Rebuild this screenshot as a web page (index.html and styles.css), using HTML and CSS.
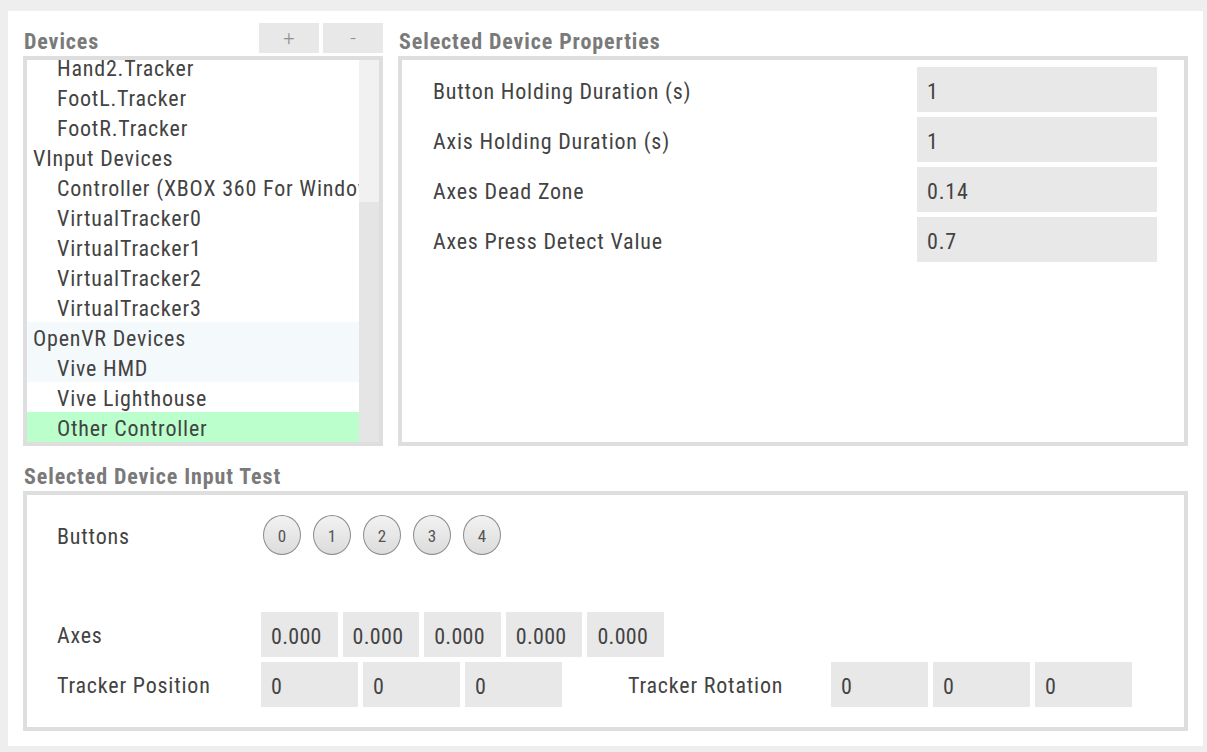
FILE: index.html
```html
<!DOCTYPE html>
<html lang="en">
<head>
<meta charset="utf-8">
<title>Device Manager</title>
<link rel="stylesheet" href="styles.css">
</head>
<body>
<div class="window">
  <div class="top">
    <section class="devices">
      <div class="sec-head">
        <h2 class="title">Devices</h2>
        <div class="btns">
          <button class="tool-btn">+</button>
          <button class="tool-btn">-</button>
        </div>
      </div>
      <div class="list-box">
        <div class="list">
          <div class="list-inner">
            <div class="row child">Hand2.Tracker</div>
            <div class="row child">FootL.Tracker</div>
            <div class="row child">FootR.Tracker</div>
            <div class="row group">VInput Devices</div>
            <div class="row child">Controller (XBOX 360 For Windows)</div>
            <div class="row child">VirtualTracker0</div>
            <div class="row child">VirtualTracker1</div>
            <div class="row child">VirtualTracker2</div>
            <div class="row child">VirtualTracker3</div>
            <div class="row group soft">OpenVR Devices</div>
            <div class="row child soft">Vive HMD</div>
            <div class="row child">Vive Lighthouse</div>
            <div class="row child selected">Other Controller</div>
          </div>
        </div>
        <div class="scrollbar"><div class="thumb"></div></div>
      </div>
    </section>
    <section class="props">
      <div class="sec-head">
        <h2 class="title">Selected Device Properties</h2>
      </div>
      <div class="props-box">
        <div class="prop-label">Button Holding Duration (s)</div>
        <div class="field">1</div>
        <div class="prop-label">Axis Holding Duration (s)</div>
        <div class="field">1</div>
        <div class="prop-label">Axes Dead Zone</div>
        <div class="field">0.14</div>
        <div class="prop-label">Axes Press Detect Value</div>
        <div class="field">0.7</div>
      </div>
    </section>
  </div>
  <section class="input-test">
    <div class="sec-head tall">
      <h2 class="title">Selected Device Input Test</h2>
    </div>
    <div class="test-box">
      <div class="test-row buttons-row">
        <div class="test-label">Buttons</div>
        <div class="circles">
          <span class="circle">0</span>
          <span class="circle">1</span>
          <span class="circle">2</span>
          <span class="circle">3</span>
          <span class="circle">4</span>
        </div>
      </div>
      <div class="test-row">
        <div class="test-label">Axes</div>
        <div class="boxes">
          <div class="field axis">0.000</div>
          <div class="field axis">0.000</div>
          <div class="field axis">0.000</div>
          <div class="field axis">0.000</div>
          <div class="field axis">0.000</div>
        </div>
      </div>
      <div class="test-row">
        <div class="test-label">Tracker Position</div>
        <div class="boxes">
          <div class="field vec">0</div>
          <div class="field vec">0</div>
          <div class="field vec">0</div>
        </div>
        <div class="test-label rot">Tracker Rotation</div>
        <div class="boxes">
          <div class="field vec">0</div>
          <div class="field vec">0</div>
          <div class="field vec">0</div>
        </div>
      </div>
    </div>
  </section>
</div>
</body>
</html>
```

FILE: styles.css
```css
html, body {
  margin: 0;
  padding: 0;
}
body {
  background: #eeeeee;
  padding: 11px 4px 6px 8px;
  color: #434343;
  font-family: "Roboto Condensed", "Roboto", sans-serif;
  font-weight: 400;
  font-size: 22px;
  letter-spacing: 0.8px;
}
.window {
  background: #ffffff;
  height: 735px;
  box-sizing: border-box;
  padding: 12px 15px 15px 15px;
}
.top {
  display: flex;
  gap: 15px;
}
.devices {
  width: 360px;
  flex: none;
}
.props {
  flex: 1;
}
.sec-head {
  height: 33px;
  display: flex;
  align-items: flex-end;
  justify-content: space-between;
}
.sec-head.tall {
  height: 45px;
}
.title {
  margin: 0 0 0 1px;
  font-weight: 700;
  font-size: 22px;
  letter-spacing: 0.9px;
  line-height: 24px;
  padding-bottom: 2px;
  color: #7a7a7a;
}
.btns {
  align-self: flex-start;
  display: flex;
  gap: 4px;
}
.tool-btn {
  width: 60px;
  height: 30px;
  border: none;
  margin: 0;
  padding: 0;
  background: #e8e8e8;
  color: #8f8f8f;
  font-family: "Roboto", sans-serif;
  font-weight: 300;
  font-size: 20px;
  line-height: 30px;
}
.list-box {
  height: 390px;
  box-sizing: border-box;
  border: 4px solid #dedede;
  display: flex;
}
.list {
  flex: 1;
  overflow: hidden;
}
.list-inner {
  margin-top: -8px;
}
.row {
  height: 30px;
  line-height: 33px;
  white-space: nowrap;
  overflow: hidden;
}
.row.group {
  padding-left: 6px;
}
.row.child {
  padding-left: 30px;
}
.row.soft {
  background: #f4fafb;
}
.row.selected {
  background: #bbffcc;
}
.scrollbar {
  width: 20px;
  flex: none;
  background: #f1f1f1;
  display: flex;
  flex-direction: column;
  justify-content: flex-end;
}
.thumb {
  height: 240px;
  background: #e5e5e5;
}
.props-box {
  height: 390px;
  box-sizing: border-box;
  border: 4px solid #dedede;
  padding: 7px 27px 0 31px;
  display: grid;
  grid-template-columns: 1fr 240px;
  grid-auto-rows: 45px;
  row-gap: 5px;
  align-content: start;
}
.prop-label {
  display: flex;
  align-items: center;
  padding-top: 3px;
}
.field {
  background: #e8e8e8;
  display: flex;
  align-items: center;
  padding: 3px 0 0 10px;
  box-sizing: border-box;
}
.test-box {
  height: 240px;
  box-sizing: border-box;
  border: 4px solid #dedede;
  padding: 20px 0 0 30px;
}
.test-row {
  display: flex;
  align-items: center;
  height: 45px;
  margin-bottom: 5px;
}
.test-row.buttons-row {
  height: 40px;
  margin-bottom: 57px;
}
.test-label {
  width: 204px;
  flex: none;
  padding-top: 2px;
}
.test-label.rot {
  margin-left: 66px;
  width: 203px;
}
.circles {
  display: flex;
  gap: 12px;
  padding-left: 2px;
}
.circle {
  width: 38px;
  height: 40px;
  box-sizing: border-box;
  border: 1px solid #8c8c8c;
  border-radius: 50%;
  background: linear-gradient(#f2f2f2, #dcdcdc);
  display: flex;
  align-items: center;
  justify-content: center;
  padding-top: 2px;
  font-size: 17px;
  letter-spacing: 0;
  color: #555555;
}
.boxes {
  display: flex;
  gap: 5px;
  height: 45px;
}
.field.axis {
  width: 76.6px;
  letter-spacing: 0.3px;
}
.field.vec {
  width: 97px;
}
```
